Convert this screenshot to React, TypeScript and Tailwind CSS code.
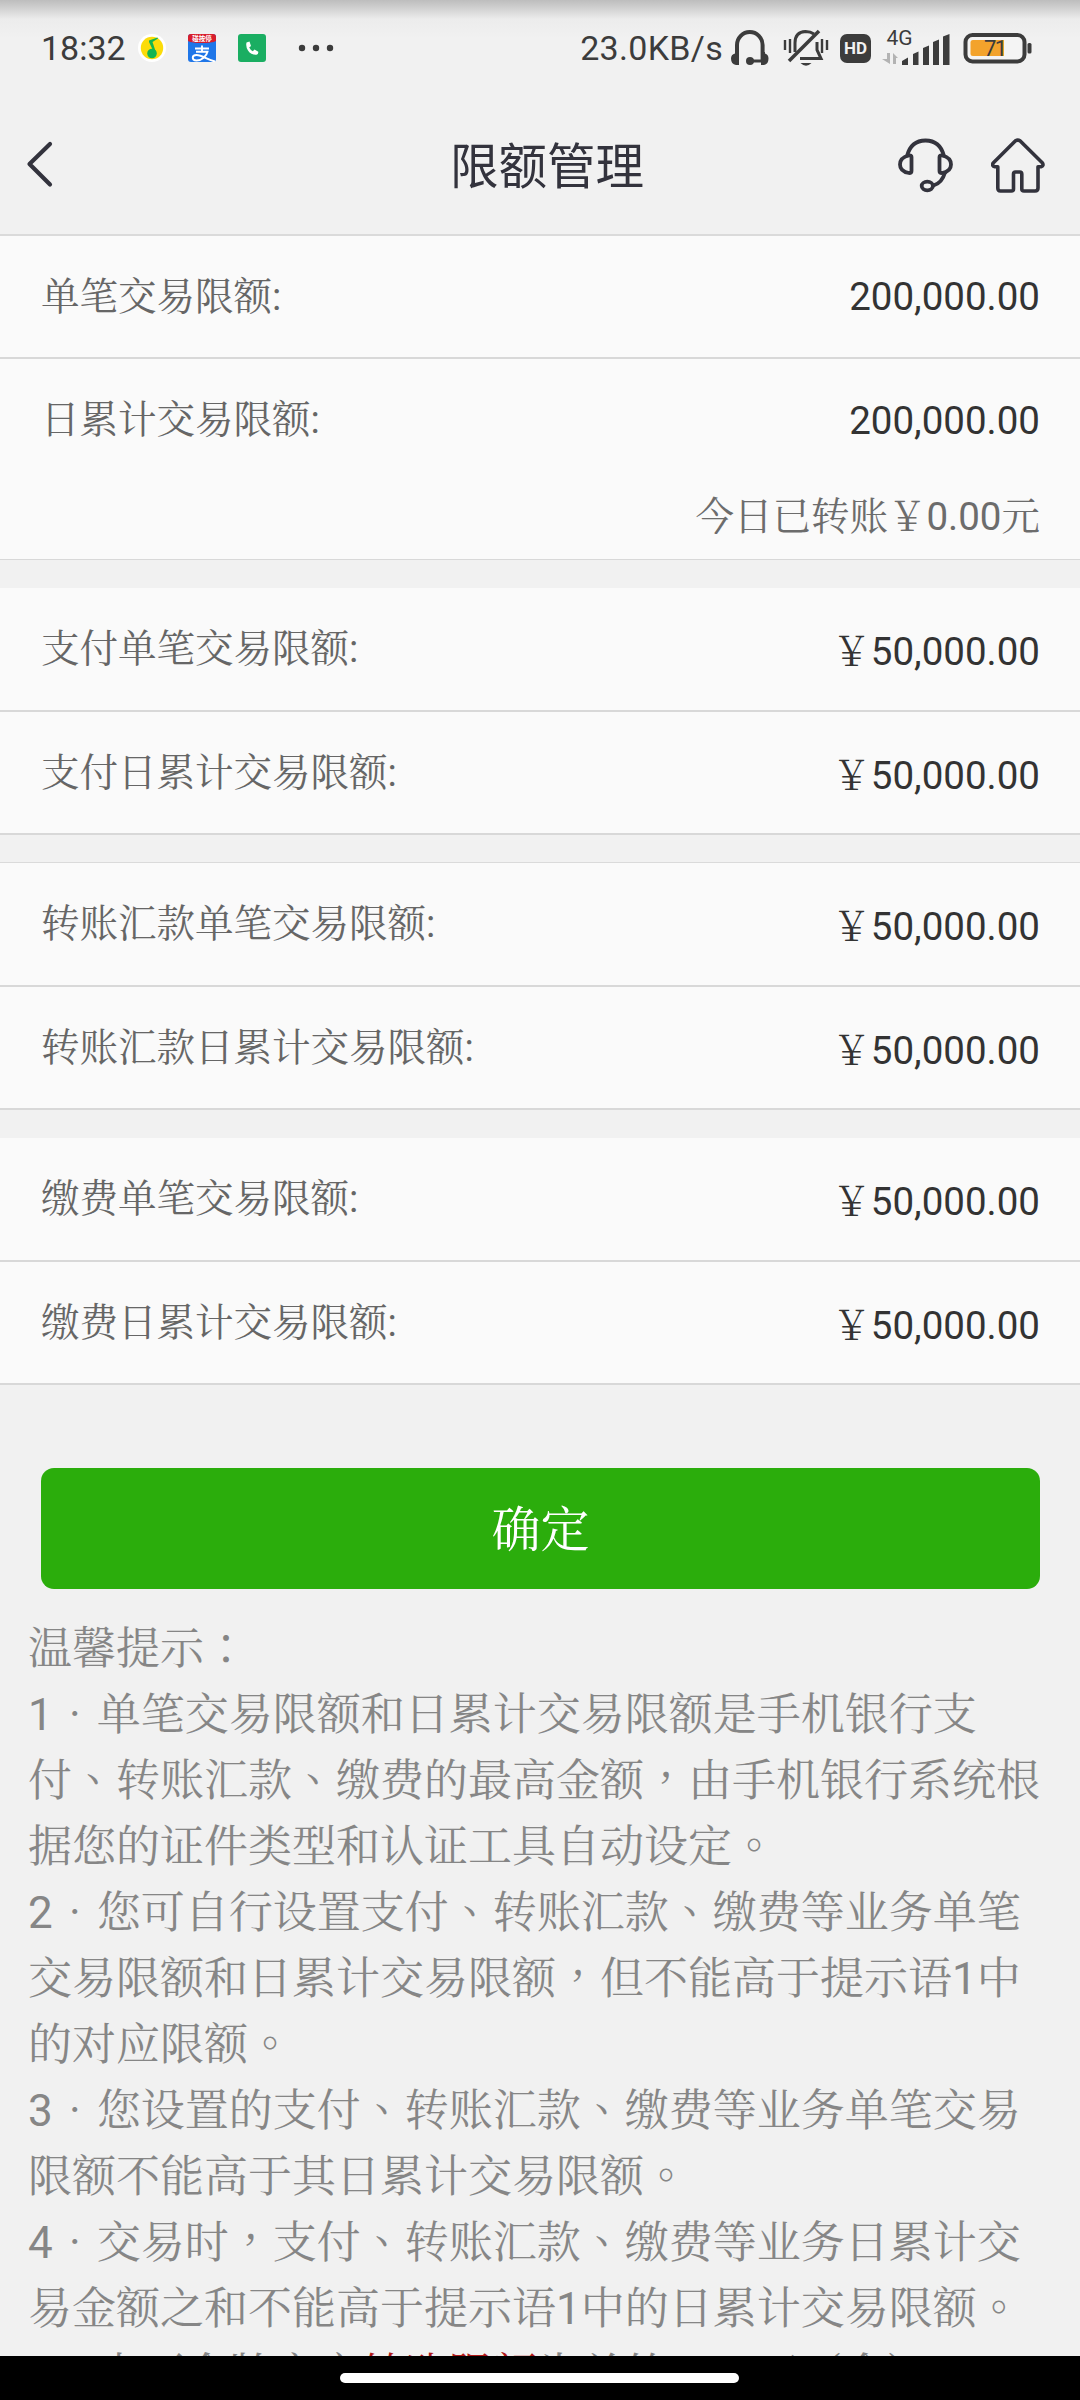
import type { ReactNode } from "react";

type Row = { label: string; value: string };

const payRows: Row[] = [
  { label: "支付单笔交易限额:", value: "￥50,000.00" },
  { label: "支付日累计交易限额:", value: "￥50,000.00" },
];

const transferRows: Row[] = [
  { label: "转账汇款单笔交易限额:", value: "￥50,000.00" },
  { label: "转账汇款日累计交易限额:", value: "￥50,000.00" },
];

const feeRows: Row[] = [
  { label: "缴费单笔交易限额:", value: "￥50,000.00" },
  { label: "缴费日累计交易限额:", value: "￥50,000.00" },
];

const tips = [
  "温馨提示：",
  "1．单笔交易限额和日累计交易限额是手机银行支",
  "付、转账汇款、缴费的最高金额，由手机银行系统根",
  "据您的证件类型和认证工具自动设定。",
  "2．您可自行设置支付、转账汇款、缴费等业务单笔",
  "交易限额和日累计交易限额，但不能高于提示语1中",
  "的对应限额。",
  "3．您设置的支付、转账汇款、缴费等业务单笔交易",
  "限额不能高于其日累计交易限额。",
  "4．交易时，支付、转账汇款、缴费等业务日累计交",
  "易金额之和不能高于提示语1中的日累计交易限额。",
];

// Full-width punctuation sits in the middle of its cell, so it uses the TC face
function Punctuated({ text }: { text: string }) {
  return (
    <>
      {text.split(/([，。、：．])/).map((part, i) =>
        i % 2 ? (
          <span key={i} lang="zh-TW" className="leading-none font-['Noto_Serif_CJK_TC','Noto_Sans_CJK_TC',sans-serif]">
            {part}
          </span>
        ) : (
          part
        )
      )}
    </>
  );
}

function StatusBar() {
  return (
    <div className="h-[96px] flex items-center pl-[41px] pr-[47px] text-[34px] leading-none text-[#3c3c3c] bg-linear-to-b from-[#bdbdbd] from-0% via-[#ececec] via-20% to-[#f1f1f1] to-40%">
      <span className="w-[97px]">18:32</span>

      {/* Music */}
      <svg width="28" height="28" viewBox="0 0 28 28">
        <circle cx="14" cy="14" r="14" fill="#fff" />
        <circle cx="14" cy="14" r="11.2" fill="#fbdc0a" />
        <path d="M11 6.500L19.500 3.500L20 4.500L14.500 8L17.500 17L15.500 17.500L11 8Z" fill="#12b552" />
        <circle cx="14" cy="19.500" r="4.800" fill="#12b552" />
      </svg>

      {/* Alipay */}
      <svg className="ml-[22px]" width="28" height="28" viewBox="0 0 28 28">
        <rect width="28" height="28" rx="3" fill="#1f76e8" />
        <path d="M3 0H25A3 3 0 0 1 28 3V7Q24 9 14 9T0 7V3A3 3 0 0 1 3 0Z" fill="#d81e2c" />
        <text x="14" y="7.200" fontSize="6.500" fontWeight="700" textAnchor="middle" fill="#fff">
          碰按停
        </text>
        <path d="M7 14.500H21M14 11.500V17.500M8 17.800H19.500C18.500 22 14 26.500 8.500 26.500C3.500 26.500 3.500 21 8.500 21C14 21 20 26 27 27.500" fill="none" stroke="#fff" strokeWidth="1.900" />
      </svg>

      {/* Phone */}
      <svg className="ml-[22px]" width="28" height="28" viewBox="0 0 28 28">
        <rect width="28" height="28" rx="3" fill="#1aae62" />
        <path d="M8.500 8.500L11.500 7.500L13 12L11.200 13.400Q12.500 16 14.800 17.200L16.500 15.600L20.300 17.800Q20.500 20.500 18.500 20.800Q13 21 10 16.500Q7.500 12.500 8.500 8.500Z" fill="#fff" />
      </svg>

      <svg className="ml-[32px]" width="36" height="8" viewBox="0 0 36 8" fill="#3c3c3c">
        <circle cx="4" cy="4" r="3.200" />
        <circle cx="18" cy="4" r="3.200" />
        <circle cx="32" cy="4" r="3.200" />
      </svg>

      <span className="ml-auto tracking-[0.3px]">23.0KB/s</span>

      {/* Headphones */}
      <svg className="ml-[8px] shrink-0" width="38" height="36" viewBox="0 0 38 36">
        <path d="M6 30V15A12.800 13 0 0 1 31.600 15V30" fill="none" stroke="#3c3c3c" strokeWidth="4" />
        <path d="M8 22V35H5Q0 34 0 28.500Q0 24.500 4 23.500V22ZM30 22V35H33Q37.500 34 37.500 28.500Q37.500 24.500 34 23.500V22Z" fill="#3c3c3c" />
        <path d="M19 31H33" stroke="#3c3c3c" strokeWidth="3" />
        <circle cx="19" cy="31" r="4" fill="#3c3c3c" />
      </svg>

      {/* Muted bell */}
      <svg className="ml-[14px] shrink-0" width="46" height="38" viewBox="0 0 46 38" fill="none" stroke="#3c3c3c" strokeWidth="3">
        <path d="M12 23V14Q12 3 22.500 2.500Q27.500 2.500 31 5M34 13V21L38 29.500H17" />
        <path d="M6 32L36 2" strokeWidth="3.500" />
        <path d="M2 11V21M7 10V24M39 10V24M44 11V21" strokeWidth="2.400" />
        <path d="M17.500 34H28.500Q23 39.500 17.500 34Z" fill="#3c3c3c" stroke="none" />
      </svg>

      {/* HD */}
      <span className="ml-[11px] w-[31px] h-[29px] shrink-0 rounded-[7px] bg-[#3c3c3c] text-[#f1f1f1] text-[17px] font-bold flex items-center justify-center">
        HD
      </span>

      {/* Signal */}
      <svg className="ml-[11px] shrink-0 overflow-visible" width="68" height="36" viewBox="0 0 68 36" fill="#3c3c3c">
        <text x="4.500" y="14.500" fontSize="21">
          4G
        </text>
        <path d="M5 23H8V34L0 29H5ZM11 34V23L16 28H14V34Z" fill="#b3b3b3" />
        <path d="M20 35V31L26 27.500V35ZM31 35V24L36.500 21.500V35ZM41 35V18L47 15.500V35ZM51 35V12L57 9.500V35ZM61 35V6.500L67.500 4V35Z" />
      </svg>

      {/* Battery */}
      <svg className="ml-[13px] shrink-0" width="70" height="32" viewBox="0 0 70 32">
        <rect x="2.500" y="3" width="59" height="26.500" rx="7" fill="#f4f4f4" stroke="#3c3c3c" strokeWidth="4" />
        <path d="M10 8H41V24H10Q7.500 24 7.500 21.500V10.500Q7.500 8 10 8Z" fill="#f3a32c" />
        <rect x="64.500" y="11" width="4" height="10.500" rx="1.500" fill="#3c3c3c" />
        <text x="32.500" y="24" fontSize="22" textAnchor="middle" fill="#3c3c3c" textLength="23">
          71
        </text>
      </svg>
    </div>
  );
}

function Header() {
  return (
    <div className="h-[138px] grid grid-cols-[1fr_auto_1fr] items-center text-[#33333d]">
      <svg className="ml-[25px]" width="30" height="48" viewBox="0 0 30 48" fill="none" stroke="currentColor" strokeWidth="4.200" strokeLinecap="round" strokeLinejoin="round">
        <path d="M25 3L4.500 23L25 43.500" />
      </svg>
      <h1 className="pt-[5px] pl-[14px] text-[48.5px] leading-[56px]">限额管理</h1>
      <div className="flex justify-end gap-[38px] pr-[35px]">
        <svg width="55" height="55" viewBox="0 0 55 55" fill="none" stroke="currentColor" strokeWidth="3.800" strokeLinejoin="round">
          <path d="M9 18Q13 2.500 27.500 2.500T46 18" />
          <path d="M13.500 19V33Q13.500 35 11 35Q2 33.500 2 26.500T11 17.500Q13.500 17 13.500 19Z" />
          <path d="M41.500 19V33Q41.500 35 44 35Q53 33.500 53 26.500T44 17.500Q41.500 17 41.500 19Z" />
          <path d="M47 34.500Q44 45 35.500 47.500" />
          <ellipse cx="29.300" cy="48" rx="5.600" ry="4.300" />
        </svg>
        <svg width="54" height="55" viewBox="0 0 54 55" fill="none" stroke="currentColor" strokeWidth="3.600" strokeLinejoin="round">
          <path d="M24.500 2.800Q26.800 1.400 29 2.800L51.500 25Q53 28 50 28.800H47V50Q47 53 44 53H33Q30.800 53 30.800 51V36Q30.800 34 28.800 34H24.500Q22.500 34 22.500 36V51Q22.500 53 20.300 53H9.500Q6.800 53 6.800 50V28.800H4Q0.500 28 2.200 25Z" />
        </svg>
      </div>
    </div>
  );
}

function LimitRow({ row, first }: { row: Row; first?: boolean }) {
  return (
    <div className={`flex justify-between pl-[41px] pr-[40px] border-b-2 border-[#d8d8d8] ${first ? "h-[124px]" : "h-[123px]"}`}>
      <span className="pt-[32px] text-[#666]">{row.label}</span>
      <span className="pt-[35px] text-[#333]">{row.value}</span>
    </div>
  );
}

function Card({ children, className = "" }: { children: ReactNode; className?: string }) {
  return (
    <div className={`bg-[#fafafa] text-[38.5px] leading-[58px] font-['Roboto','Noto_Serif_CJK_SC','Noto_Sans_CJK_SC',sans-serif] ${className}`}>
      {children}
    </div>
  );
}

export default function App() {
  return (
    <div lang="zh-CN" className="w-[1080px] h-[2400px] overflow-hidden flex flex-col bg-[#f1f1f1] font-['Roboto','Noto_Sans_CJK_SC',sans-serif]">
      <StatusBar />
      <Header />

      <Card className="border-t-2 border-[#dadada]">
        <div className="h-[123px] flex justify-between pl-[41px] pr-[40px] border-b-2 border-[#d8d8d8]">
          <span className="pt-[32px] text-[#666]">单笔交易限额:</span>
          <span className="pt-[32px] text-[#333]">200,000.00</span>
        </div>
        <div className="h-[201px] pl-[41px] pr-[40px] border-b border-[#d8d8d8]">
          <div className="flex justify-between">
            <span className="pt-[32px] text-[#666]">日累计交易限额:</span>
            <span className="pt-[33px] text-[#333]">200,000.00</span>
          </div>
          <p className="mt-[38px] text-right text-[#6c6c6c]">今日已转账￥0.00元</p>
        </div>
      </Card>

      <Card className="mt-[28px]">
        <LimitRow row={payRows[0]} first />
        <LimitRow row={payRows[1]} />
      </Card>

      <Card className="mt-[27px] border-t border-[#dadada]">
        <LimitRow row={transferRows[0]} first />
        <LimitRow row={transferRows[1]} />
      </Card>

      <Card className="mt-[28px]">
        <LimitRow row={feeRows[0]} first />
        <LimitRow row={feeRows[1]} />
      </Card>

      <button className="mt-[83px] ml-[41px] mr-[40px] pb-[3px] h-[121px] shrink-0 rounded-[13px] bg-[#2bad0c] text-white text-[49px] font-['Noto_Serif_CJK_SC','Noto_Sans_CJK_SC',sans-serif]">
        确定
      </button>

      {/* Tips run on below the fold and are cut by the gesture bar */}
      <div className="mt-[27px] pl-[28px] flex-1 min-h-0 overflow-hidden text-[44px] leading-[66px] text-[#868686] whitespace-nowrap font-['Roboto','Noto_Serif_CJK_SC','Noto_Sans_CJK_SC',sans-serif]">
        {tips.map((line) => (
          <p key={line} className="h-[66px]">
            <Punctuated text={line} />
          </p>
        ))}
        <p className="h-[66px]">
          <Punctuated text="5．本可金牌客户" />
          <span className="text-[#b01818]">转账限额</span>
          为单笔5.00万（含）
        </p>
      </div>

      <div className="h-[44px] shrink-0 bg-black flex justify-center pt-[17px] pr-[2px]">
        <div className="w-[399px] h-[10px] rounded-full bg-white" />
      </div>
    </div>
  );
}
